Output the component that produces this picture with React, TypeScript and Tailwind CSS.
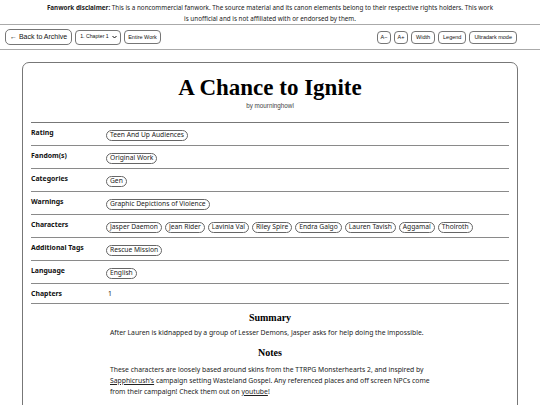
const sans = { fontFamily: '"Noto Sans", "Open Sans", sans-serif' };

const rows: { label: string; tags?: string[]; text?: string }[] = [
  { label: 'Rating', tags: ['Teen And Up Audiences'] },
  { label: 'Fandom(s)', tags: ['Original Work'] },
  { label: 'Categories', tags: ['Gen'] },
  { label: 'Warnings', tags: ['Graphic Depictions of Violence'] },
  {
    label: 'Characters',
    tags: [
      'Jasper Daemon',
      'Jean Rider',
      'Lavinia Val',
      'Riley Spire',
      'Endra Galgo',
      'Lauren Tavish',
      'Aggamal',
      'Tholroth',
    ],
  },
  { label: 'Additional Tags', tags: ['Rescue Mission'] },
  { label: 'Language', tags: ['English'] },
  { label: 'Chapters', text: '1' },
];

function ToolButton({ children, className = '' }: { children: React.ReactNode; className?: string }) {
  return (
    <button
      className={`flex items-center border border-[#767676] bg-white text-[#111] rounded-[4px] font-['Liberation_Sans',Arial,sans-serif] ${className}`}
    >
      {children}
    </button>
  );
}

function Tag({ name }: { name: string }) {
  return (
    <span className="inline-flex items-center h-[11px] px-[3px] border border-[#666] rounded-full text-[6.7px] leading-none text-[#222]">
      {name}
    </span>
  );
}

export default function App() {
  return (
    <div className="w-[540px] h-[405px] overflow-hidden bg-white text-[#222]" style={sans}>
      {/* Disclaimer */}
      <div className="h-[24px] pt-[2px] text-center text-[6.3px] leading-[11px] text-[#222]">
        <span className="font-bold">Fanwork disclaimer:</span> This is a noncommercial fanwork. The source material and
        its canon elements belong to their respective rights holders. This work
        <br />
        is unofficial and is not affiliated with or endorsed by them.
      </div>

      {/* Toolbar */}
      <div className="h-[26px] flex items-center justify-between pl-[5px] pr-[23px] border-y border-[#aaa]">
        <div className="flex items-center gap-[3px]">
          <ToolButton className="h-[16px] px-[4px] text-[7px] rounded-[5px]">← Back to Archive</ToolButton>
          <ToolButton className="h-[15px] w-[46px] pl-[4px] pr-[3px] justify-between text-[5.2px]">
            <span>1. Chapter 1</span>
            <svg width="5" height="4" viewBox="0 0 10 8" fill="none" stroke="#111" strokeWidth="2">
              <path d="M1 2l4 4 4-4" />
            </svg>
          </ToolButton>
          <ToolButton className="h-[14px] px-[3px] text-[5.5px]">Entire Work</ToolButton>
        </div>
        <div className="flex items-center gap-[3px]">
          <ToolButton className="h-[13px] w-[14px] justify-center text-[5.5px]">A−</ToolButton>
          <ToolButton className="h-[13px] w-[14px] justify-center text-[5.5px]">A+</ToolButton>
          <ToolButton className="h-[13px] px-[4px] text-[5.5px]">Width</ToolButton>
          <ToolButton className="h-[13px] px-[4px] text-[5.5px]">Legend</ToolButton>
          <ToolButton className="h-[13px] px-[4px] text-[5.5px]">Ultradark mode</ToolButton>
        </div>
      </div>

      {/* Work card */}
      <div className="mx-[22px] mt-[12px] border border-[#777] rounded-[7px] px-[8px] pb-[20px]">
        <h1 className="pt-[12px] text-center text-[23px] leading-[26px] font-bold text-black font-['Liberation_Serif',Georgia,serif]">
          A Chance to Ignite
        </h1>
        <p className="text-center text-[6.3px] leading-[10px] text-[#444] font-['Liberation_Sans',Arial,sans-serif]">
          by mourninghowl
        </p>

        <div className="mt-[11px] border-t border-[#777]">
          {rows.map((r) => (
            <div key={r.label} className="grid grid-cols-[75px_1fr] border-b border-[#8a8a8a]">
              <div className="pt-[4px] pb-[4px] text-[6.9px] leading-[11px] font-bold text-[#111]">{r.label}</div>
              {r.tags ? (
                <div className="pt-[7px] pb-[4px] flex flex-wrap gap-[3px]">
                  {r.tags.map((t) => (
                    <Tag key={t} name={t} />
                  ))}
                </div>
              ) : (
                <div className="pt-[4px] pb-[4px] pl-[2px] text-[6.8px] leading-[11px] text-[#222]">{r.text}</div>
              )}
            </div>
          ))}
        </div>

        <div className="w-[320px] mx-auto">
          <h2 className="mt-[7px] text-center text-[10px] leading-[14px] font-bold text-black font-['Liberation_Serif',Georgia,serif]">
            Summary
          </h2>
          <p className="mt-[2px] text-[6.8px] leading-[11px]">
            After Lauren is kidnapped by a group of Lesser Demons, Jasper asks for help doing the impossible.
          </p>
          <h2 className="mt-[8px] text-center text-[10px] leading-[14px] font-bold text-black font-['Liberation_Serif',Georgia,serif]">
            Notes
          </h2>
          <p className="mt-[4px] text-[6.8px] leading-[11px]">
            These characters are loosely based around skins from the TTRPG Monsterhearts 2, and inspired by{' '}
            <span className="underline">Sapphicrush's</span> campaign setting Wasteland Gospel. Any referenced places
            and off screen NPCs come from their campaign! Check them out on <span className="underline">youtube</span>!
          </p>
          <p className="mt-[11px] text-[6.8px] leading-[11px]">
            Lauren Tavish (The Infamous L) is a Werewolf, Jasper Daemon is a Fae, and Jean Rider is a Witch.
          </p>
        </div>
      </div>
    </div>
  );
}
